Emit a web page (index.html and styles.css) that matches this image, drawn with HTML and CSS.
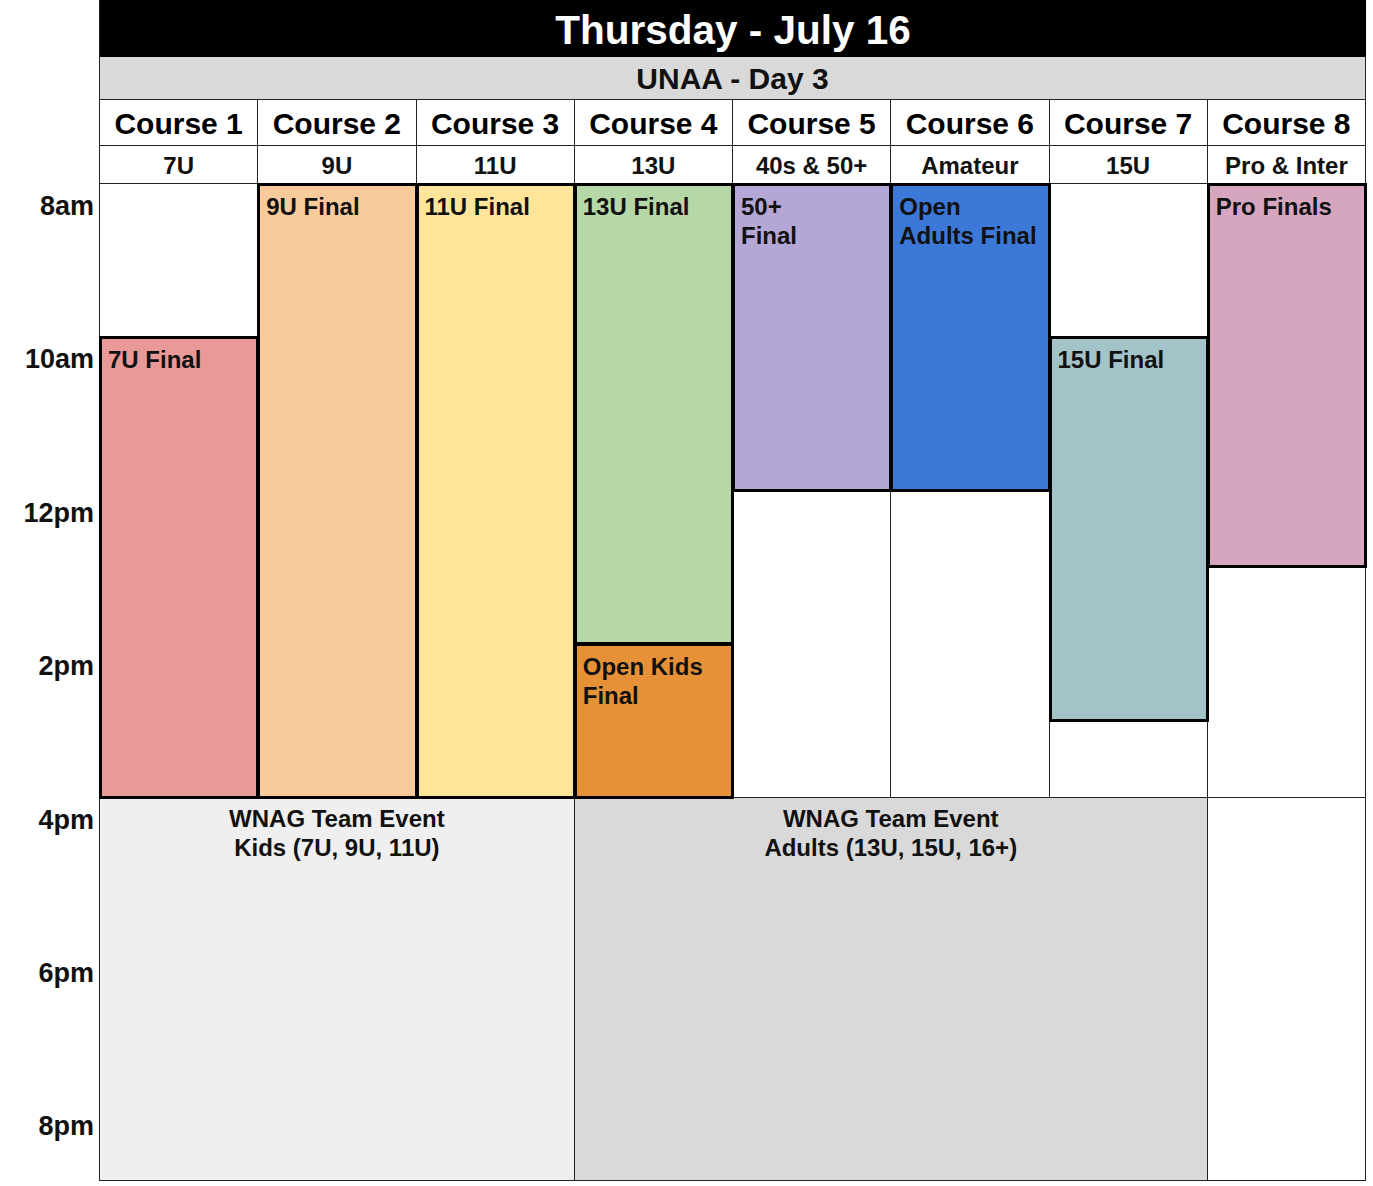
FILE: index.html
```html
<!DOCTYPE html>
<html lang="en">
<head>
<meta charset="utf-8">
<title>Thursday - July 16</title>
<link rel="stylesheet" href="styles.css">
</head>
<body>
<div class="page">
  <div class="times">
    <div class="slot">8am</div>
    <div class="slot">10am</div>
    <div class="slot">12pm</div>
    <div class="slot">2pm</div>
    <div class="slot">4pm</div>
    <div class="slot">6pm</div>
    <div class="slot slot-last">8pm</div>
  </div>
  <div class="sheet">
    <div class="title">Thursday - July 16</div>
    <div class="subtitle">UNAA - Day 3</div>

    <div class="course c1">Course 1</div>
    <div class="course c2">Course 2</div>
    <div class="course c3">Course 3</div>
    <div class="course c4">Course 4</div>
    <div class="course c5">Course 5</div>
    <div class="course c6">Course 6</div>
    <div class="course c7">Course 7</div>
    <div class="course c8">Course 8</div>

    <div class="age c1">7U</div>
    <div class="age c2">9U</div>
    <div class="age c3">11U</div>
    <div class="age c4">13U</div>
    <div class="age c5">40s &amp; 50+</div>
    <div class="age c6">Amateur</div>
    <div class="age c7">15U</div>
    <div class="age c8">Pro &amp; Inter</div>

    <div class="cell c1 h8-10"></div>
    <div class="cell c5 h12-16"></div>
    <div class="cell c6 h12-16"></div>
    <div class="cell c7 h8-10"></div>
    <div class="cell c7 h15-16"></div>
    <div class="cell c8 h13-16"></div>
    <div class="cell c8 h16-21"></div>

    <div class="team team-kids">WNAG Team Event<br>Kids (7U, 9U, 11U)</div>
    <div class="team team-adults">WNAG Team Event<br>Adults (13U, 15U, 16+)</div>

    <div class="event ev-7u c1 h10-16">7U Final</div>
    <div class="event ev-9u c2 h8-16">9U Final</div>
    <div class="event ev-11u c3 h8-16">11U Final</div>
    <div class="event ev-13u c4 h8-14">13U Final</div>
    <div class="event ev-kids c4 h14-16">Open Kids<br>Final</div>
    <div class="event ev-50 c5 h8-12">50+<br>Final</div>
    <div class="event ev-adults c6 h8-12">Open<br>Adults Final</div>
    <div class="event ev-15u c7 h10-15">15U Final</div>
    <div class="event ev-pro c8 h8-13">Pro Finals</div>
  </div>
</div>
</body>
</html>
```
FILE: styles.css
```css
* { box-sizing: border-box; }

html, body {
  margin: 0;
  padding: 0;
  background: #ffffff;
}

body {
  font-family: "Liberation Sans", Arial, sans-serif;
  font-weight: bold;
  color: #111;
}

.page {
  display: flex;
  align-items: flex-start;
  width: 1373px;
}

/* time labels */
.times {
  width: 99px;
  flex: none;
  padding-top: 184px;
  display: flex;
  flex-direction: column;
}

.slot {
  height: 153.4px;
  padding: 7px 5px 0 0;
  text-align: right;
  font-size: 27px;
  line-height: 30px;
}

.slot-last { height: 76.7px; }

/* sheet */
.sheet {
  width: 1267px;
  border-left: 1px solid #222;
  display: grid;
  grid-template-columns: repeat(8, 1fr);
  grid-template-rows: 57px 43px 46px 38px repeat(13, 76.7px);
}

.title {
  grid-column: 1 / -1;
  grid-row: 1;
  background: #000;
  color: #fff;
  font-size: 40.5px;
  padding-top: 4px;
  line-height: 53px;
  text-align: center;
}

.subtitle {
  grid-column: 1 / -1;
  grid-row: 2;
  background: #d9d9d9;
  border-right: 1px solid #222;
  border-bottom: 1px solid #222;
  font-size: 30px;
  padding-top: 2px;
  line-height: 40px;
  text-align: center;
  color: #111;
}

.course, .age, .cell, .team, .event {
  border-right: 1px solid #222;
  border-bottom: 1px solid #222;
}

.course {
  grid-row: 3;
  font-size: 30px;
  padding-top: 2px;
  line-height: 43px;
  text-align: center;
  color: #000;
  white-space: nowrap;
}

.age {
  grid-row: 4;
  font-size: 24px;
  padding-top: 2px;
  line-height: 35px;
  text-align: center;
  white-space: nowrap;
}

.cell { background: #fff; }

.c1 { grid-column: 1; }
.c2 { grid-column: 2; }
.c3 { grid-column: 3; }
.c4 { grid-column: 4; }
.c5 { grid-column: 5; }
.c6 { grid-column: 6; }
.c7 { grid-column: 7; }
.c8 { grid-column: 8; }

/* hour rows: 8am = line 5 */
.h8-10  { grid-row: 5 / 7; }
.h8-12  { grid-row: 5 / 9; }
.h8-13  { grid-row: 5 / 10; }
.h8-14  { grid-row: 5 / 11; }
.h8-16  { grid-row: 5 / 13; }
.h10-15 { grid-row: 7 / 12; }
.h10-16 { grid-row: 7 / 13; }
.h12-16 { grid-row: 9 / 13; }
.h13-16 { grid-row: 10 / 13; }
.h14-16 { grid-row: 11 / 13; }
.h15-16 { grid-row: 12 / 13; }
.h16-21 { grid-row: 13 / 18; }

.team {
  grid-row: 13 / 18;
  font-size: 24px;
  line-height: 29px;
  padding-top: 6px;
  text-align: center;
}

.team-kids {
  grid-column: 1 / 4;
  background: #efefef;
}

.team-adults {
  grid-column: 4 / 8;
  background: #d9d9d9;
}

.event {
  position: relative;
  z-index: 1;
  outline: 3px solid #000;
  outline-offset: -2px;
  font-size: 24px;
  line-height: 29px;
  padding: 8px 0 0 8px;
  white-space: nowrap;
  color: #111;
}

.ev-7u     { background: #ea9999; }
.ev-9u     { background: #f9cb9c; }
.ev-11u    { background: #ffe599; }
.ev-13u    { background: #b6d7a8; }
.ev-kids   { background: #e69138; }
.ev-50     { background: #b4a7d6; }
.ev-adults { background: #3c78d8; }
.ev-15u    { background: #a2c4c9; }
.ev-pro    { background: #d5a6bd; }
```
